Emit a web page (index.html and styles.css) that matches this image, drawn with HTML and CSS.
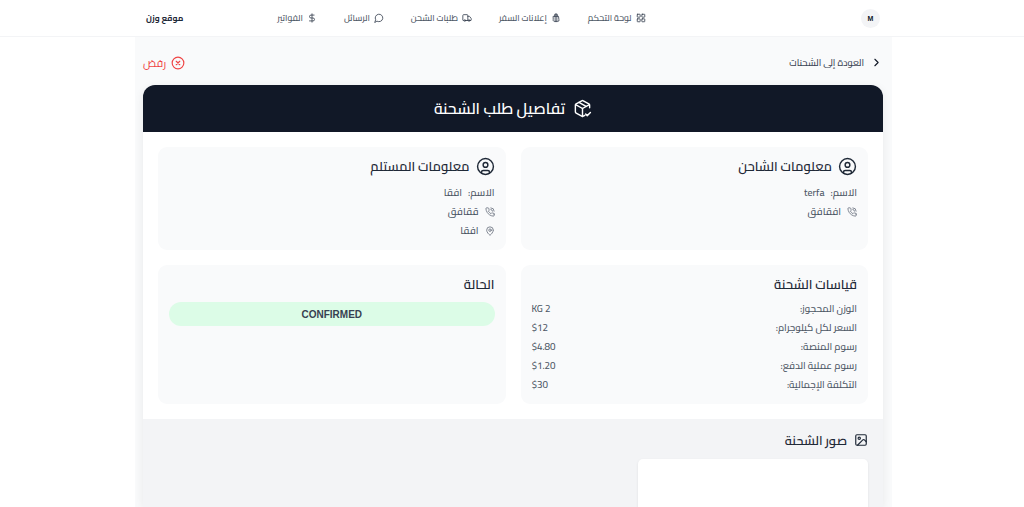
FILE: index.html
```html
<!DOCTYPE html>
<html lang="ar" dir="rtl">
<head>
<meta charset="utf-8">
<title>تفاصيل طلب الشحنة</title>
<link rel="stylesheet" href="styles.css">
</head>
<body>
<header class="topbar">
  <div class="topbar-inner">
    <div class="avatar">M</div>
    <nav class="nav">
      <a class="nav-item"><svg class="ic-nav" viewBox="0 0 24 24"><rect x="3" y="3" width="7" height="7" rx="1"/><rect x="14" y="3" width="7" height="7" rx="1"/><rect x="14" y="14" width="7" height="7" rx="1"/><rect x="3" y="14" width="7" height="7" rx="1"/></svg>لوحة التحكم</a>
      <a class="nav-item"><svg class="ic-nav" viewBox="0 0 24 24"><path d="M6 8h12l1 8a3 3 0 0 1-3 4H8a3 3 0 0 1-3-4z"/><path d="M9 8V5a3 3 0 0 1 6 0v3"/><path d="M10 3v18M14 3v18"/></svg>إعلانات السفر</a>
      <a class="nav-item"><svg class="ic-nav" viewBox="0 0 24 24"><path d="M14 18V6a2 2 0 0 0-2-2H4a2 2 0 0 0-2 2v11a1 1 0 0 0 1 1h2"/><path d="M15 18H9"/><path d="M19 18h2a1 1 0 0 0 1-1v-3.650a1 1 0 0 0-.22-.62l-3.480-4.350A1 1 0 0 0 17.520 8H14"/><circle cx="17" cy="18" r="2"/><circle cx="7" cy="18" r="2"/></svg>طلبات الشحن</a>
      <a class="nav-item"><svg class="ic-nav" viewBox="0 0 24 24"><path d="M7.900 20A9 9 0 1 0 4 16.100L2 22Z"/></svg>الرسائل</a>
      <a class="nav-item"><svg class="ic-nav" viewBox="0 0 24 24"><path d="M12 2v20"/><path d="M17 5H9.500a3.500 3.500 0 0 0 0 7h5a3.500 3.500 0 0 1 0 7H6"/></svg>الفواتير</a>
    </nav>
    <div class="brand">موقع وزن</div>
  </div>
</header>
<main class="page">
  <div class="actions">
    <a class="back"><svg class="ic-back" viewBox="0 0 24 24"><path d="m9 18 6-6-6-6"/></svg>العودة إلى الشحنات</a>
    <a class="reject"><svg class="ic-reject" viewBox="0 0 24 24"><circle cx="12" cy="12" r="10"/><path d="m15 9-6 6M9 9l6 6"/></svg>رفض</a>
  </div>
  <section class="sheet">
    <h1 class="sheet-head"><svg class="ic-head" viewBox="0 0 24 24"><path d="M21 11V8a2 2 0 0 0-1-1.730l-7-4a2 2 0 0 0-2 0l-7 4A2 2 0 0 0 3 8v8a2 2 0 0 0 1 1.730l7 4a2 2 0 0 0 2 0l2-1.140"/><path d="m7.500 4.270 9 5.150"/><path d="M3.290 7 12 12l8.710-5"/><path d="M12 22V12"/><path d="m16 19 2 2 4-4"/></svg>تفاصيل طلب الشحنة</h1>
    <div class="grid">
      <article class="card">
        <h2 class="card-title"><svg class="ic-user" viewBox="0 0 24 24"><circle cx="12" cy="12" r="10"/><circle cx="12" cy="10" r="3"/><path d="M7 20.660V19a2 2 0 0 1 2-2h6a2 2 0 0 1 2 2v1.660"/></svg>معلومات الشاحن</h2>
        <p class="line"><span>الاسم:</span><span class="val">terfa</span></p>
        <p class="line"><svg class="ic-small" viewBox="0 0 24 24"><path d="M22 16.900v3a2 2 0 0 1-2.200 2 19.800 19.800 0 0 1-8.600-3 19.500 19.500 0 0 1-6-6 19.800 19.800 0 0 1-3-8.700A2 2 0 0 1 4.100 2h3a2 2 0 0 1 2 1.700c.1 1 .4 1.900.7 2.800a2 2 0 0 1-.5 2.100L8.100 9.900a16 16 0 0 0 6 6l1.300-1.300a2 2 0 0 1 2.100-.4c.9.300 1.800.6 2.800.7a2 2 0 0 1 1.700 2z"/><path d="M14 2a8 8 0 0 1 8 8M14 6a4 4 0 0 1 4 4"/></svg>افقافق</p>
      </article>
      <article class="card">
        <h2 class="card-title"><svg class="ic-user" viewBox="0 0 24 24"><circle cx="12" cy="12" r="10"/><circle cx="12" cy="10" r="3"/><path d="M7 20.660V19a2 2 0 0 1 2-2h6a2 2 0 0 1 2 2v1.660"/></svg>معلومات المستلم</h2>
        <p class="line"><span>الاسم:</span><span class="val">افقا</span></p>
        <p class="line"><svg class="ic-small" viewBox="0 0 24 24"><path d="M22 16.900v3a2 2 0 0 1-2.200 2 19.800 19.800 0 0 1-8.600-3 19.500 19.500 0 0 1-6-6 19.800 19.800 0 0 1-3-8.700A2 2 0 0 1 4.100 2h3a2 2 0 0 1 2 1.700c.1 1 .4 1.900.7 2.800a2 2 0 0 1-.5 2.100L8.100 9.900a16 16 0 0 0 6 6l1.300-1.300a2 2 0 0 1 2.100-.4c.9.300 1.800.6 2.800.7a2 2 0 0 1 1.700 2z"/><path d="M14 2a8 8 0 0 1 8 8M14 6a4 4 0 0 1 4 4"/></svg>ققافق</p>
        <p class="line"><svg class="ic-small" viewBox="0 0 24 24"><path d="M20 10c0 5-5.500 10.200-7.400 11.800a1 1 0 0 1-1.200 0C9.500 20.200 4 15 4 10a8 8 0 0 1 16 0"/><circle cx="12" cy="10" r="3"/></svg>افقا</p>
      </article>
      <article class="card">
        <h2 class="card-title plain">قياسات الشحنة</h2>
        <dl class="specs">
          <div class="spec"><dt>الوزن المحجوز:</dt><dd>2 KG</dd></div>
          <div class="spec"><dt>السعر لكل كيلوجرام:</dt><dd>$12</dd></div>
          <div class="spec"><dt>رسوم المنصة:</dt><dd>$4.80</dd></div>
          <div class="spec"><dt>رسوم عملية الدفع:</dt><dd>$1.20</dd></div>
          <div class="spec"><dt>التكلفة الإجمالية:</dt><dd>$30</dd></div>
        </dl>
      </article>
      <article class="card">
        <h2 class="card-title plain">الحالة</h2>
        <div class="status">CONFIRMED</div>
      </article>
    </div>
    <div class="photos">
      <h2 class="photos-title"><svg class="ic-image" viewBox="0 0 24 24"><rect x="3" y="3" width="18" height="18" rx="2"/><circle cx="9" cy="9" r="2"/><path d="m21 15-3.100-3.100a2 2 0 0 0-2.800 0L6 21"/></svg>صور الشحنة</h2>
      <div class="photo-grid"><div class="photo"></div></div>
    </div>
  </section>
</main>
</body>
</html>
```
FILE: styles.css
```css
* { box-sizing: border-box; }
html, body { margin: 0; height: 507px; overflow: hidden; }
body {
  background: #fff;
  color: #111827;
  font-family: Cairo, "Liberation Sans", sans-serif;
}
svg { fill: none; stroke: currentColor; stroke-linecap: round; stroke-linejoin: round; stroke-width: 2; flex: none; }
.topbar { height: 37px; border-bottom: 1px solid #f3f4f6; background: #fff; }
.topbar-inner { height: 36px; margin-right: 144px; margin-left: 146px; display: flex; align-items: center; }
.avatar { width: 19px; height: 19px; border-radius: 50%; background: #f3f4f6; font: 700 7px "Liberation Sans", sans-serif; display: flex; align-items: center; justify-content: center; margin-left: 215px; }
.nav { display: flex; gap: 26.500px; }
.nav-item { display: flex; align-items: center; gap: 4.500px; font-size: 8.700px; font-weight: 500; color: #4b5563; white-space: nowrap; }
.ic-nav { width: 10px; height: 10px; color: #374151; }
.brand { margin-right: auto; font-size: 8.500px; font-weight: 700; color: #1f2937; white-space: nowrap; }
.page { margin: 0 132px 0 135px; height: 470px; padding: 0 9px 0 8px; background: #f9fafb; }
.actions { height: 48px; padding-top: 3px; display: flex; align-items: center; justify-content: space-between; font-size: 9.300px; font-weight: 500; }
.back { display: flex; align-items: center; gap: 6px; color: #374151; }
.ic-back { width: 13px; height: 13px; color: #111827; }
.ic-reject { width: 14px; height: 14px; }
.reject { display: flex; align-items: center; gap: 5px; color: #ef4444; font-size: 11px; font-weight: 400; }
.sheet { background: #fff; border-radius: 12px 12px 0 0; height: 422px; overflow: hidden; box-shadow: 0 2px 10px rgba(0,0,0,.07); }
.sheet-head { margin: 0; height: 47px; background: #111827; color: #fff; font-size: 15.600px; font-weight: 600; display: flex; align-items: center; justify-content: center; gap: 8px; }
.ic-head { width: 19px; height: 19px; stroke-width: 1.800; }
.grid { display: grid; grid-template-columns: 1fr 1fr; grid-template-rows: 103px 139px; gap: 15px; padding: 15px; }
.card { background: #f9fafb; border-radius: 9px; padding: 10px 11px; }
.card-title { margin: 0 0 8px; display: flex; align-items: center; gap: 6px; font-size: 13px; font-weight: 600; height: 18px; color: #1f2937; }
.ic-user { width: 19px; height: 19px; stroke-width: 1.800; }
.plain { margin-bottom: 6px; }
.line { margin: 0; height: 19px; display: flex; align-items: center; gap: 6px; font-size: 10px; font-weight: 500; color: #4b5563; }
.ic-small { width: 10px; height: 10px; color: #6b7280; }
.specs { margin: 0; }
.spec { height: 19px; display: flex; justify-content: space-between; align-items: center; font-size: 9.800px; font-weight: 500; color: #4b5563; }
.spec dd { margin: 0; }
.status { height: 24px; margin-top: 9px; border-radius: 12px; background: #dcfce7; font: 700 10px "Liberation Sans", sans-serif; color: #374151; display: flex; align-items: center; justify-content: center; }
.photos { background: #f3f4f6; padding: 13px 15px; height: 120px; }
.photos-title { margin: 0 0 11px; height: 16px; display: flex; align-items: center; gap: 7px; font-size: 12.800px; font-weight: 600; color: #1f2937; }
.ic-image { width: 14px; height: 14px; }
.photo-grid { display: grid; grid-template-columns: repeat(3, 1fr); gap: 10px; }
.photo { height: 180px; background: #fff; border-radius: 5px; box-shadow: 0 1px 3px rgba(0,0,0,.08); }
```
